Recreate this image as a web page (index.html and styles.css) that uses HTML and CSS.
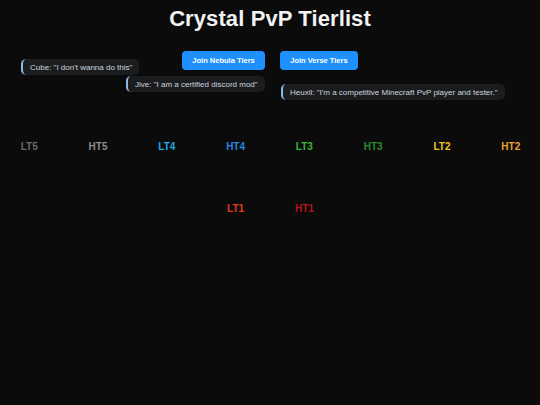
FILE: index.html
```html
<!DOCTYPE html>
<html lang="en">
<head>
<meta charset="utf-8">
<title>Crystal PvP Tierlist</title>
<link rel="stylesheet" href="styles.css">
</head>
<body>
<header class="header">
  <h1 class="title">Crystal PvP Tierlist</h1>
  <div class="links">
    <a class="btn" href="#">Join Nebula Tiers</a>
    <a class="btn" href="#">Join Verse Tiers</a>
  </div>
</header>
<div class="quote q-cube">Cube: "I don't wanna do this"</div>
<div class="quote q-jive">Jive: "I am a certified discord mod"</div>
<div class="quote q-heuxil">Heuxil: "I'm a competitive Minecraft PvP player and tester."</div>
<main class="tiers">
  <div class="tier lt5">LT5</div>
  <div class="tier ht5">HT5</div>
  <div class="tier lt4">LT4</div>
  <div class="tier ht4">HT4</div>
  <div class="tier lt3">LT3</div>
  <div class="tier ht3">HT3</div>
  <div class="tier lt2">LT2</div>
  <div class="tier ht2">HT2</div>
  <div class="tier lt1">LT1</div>
  <div class="tier ht1">HT1</div>
</main>
</body>
</html>
```
FILE: styles.css
```css
html, body {
  margin: 0;
  padding: 0;
  background: #0b0b0b;
  font-family: "Liberation Sans", Arial, sans-serif;
  color: #eee;
  height: 100%;
}
body {
  position: relative;
  overflow: hidden;
}
.header {
  display: flex;
  flex-direction: column;
  align-items: center;
  padding-top: 6px;
}
.title {
  margin: 0;
  font-size: 22px;
  line-height: 25px;
  font-weight: bold;
  color: #f2f2f2;
  letter-spacing: 0.1px;
}
.links {
  display: flex;
  gap: 14.5px;
  margin-top: 20px;
}
.btn {
  display: block;
  background: #1e90ff;
  color: #fff;
  text-decoration: none;
  font-size: 7.5px;
  line-height: 9px;
  font-weight: bold;
  padding: 5px 10.5px;
  border-radius: 4px;
}
.quote {
  position: absolute;
  background: #1b1c1e;
  color: #cdd5de;
  font-size: 8px;
  line-height: 9px;
  padding: 3.5px 7px 3.5px 7px;
  border-left: 2px solid #8cbbe6;
  border-radius: 5px;
  white-space: nowrap;
}
.q-cube { left: 21px; top: 59px; }
.q-jive { left: 126px; top: 76px; }
.q-heuxil { left: 281px; top: 84px; }
.tiers {
  display: flex;
  flex-wrap: wrap;
  justify-content: center;
  column-gap: 12.8px;
  row-gap: 50px;
  margin-top: 71px;
}
.tier {
  width: 56px;
  text-align: center;
  font-size: 10px;
  line-height: 12px;
  font-weight: bold;
}
.lt5 { color: #6a6a6a; }
.ht5 { color: #8c8c8c; }
.lt4 { color: #27a6e2; }
.ht4 { color: #2a86e0; }
.lt3 { color: #38b838; }
.ht3 { color: #2c8a2c; }
.lt2 { color: #f2c41c; }
.ht2 { color: #f0a12e; }
.lt1 { color: #e23c16; }
.ht1 { color: #b51616; }
```
